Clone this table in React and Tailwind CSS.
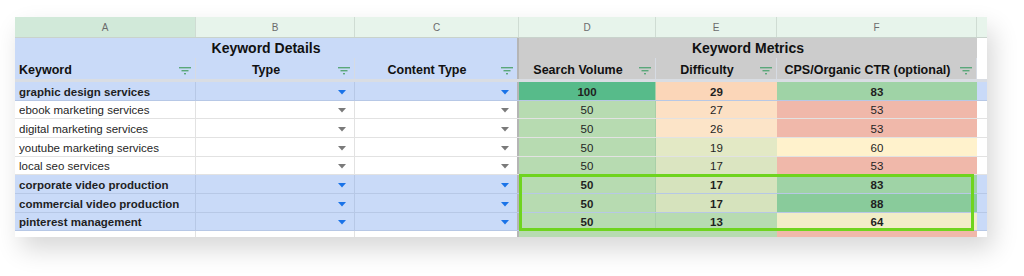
import React from 'react'

const COLS = 'grid grid-cols-[181px_159px_164px_137px_121px_200px_10px]'

const ROWS = [
  { k: 'graphic design services', bold: true, d: 100, e: 29, f: 83, h: 'h-[19px]', dc: 'bg-[#57bb8a]', ec: 'bg-[#fbd6b8]', fc: 'bg-[#9fd3a6]' },
  { k: 'ebook marketing services', d: 50, e: 27, f: 53, h: 'h-[18px]', dc: 'bg-[#b7dbb1]', ec: 'bg-[#fce0c4]', fc: 'bg-[#f0b8aa]' },
  { k: 'digital marketing services', d: 50, e: 26, f: 53, h: 'h-[19px]', dc: 'bg-[#b7dbb1]', ec: 'bg-[#fce4c8]', fc: 'bg-[#f0b8aa]' },
  { k: 'youtube marketing services', d: 50, e: 19, f: 60, h: 'h-[19px]', dc: 'bg-[#b7dbb1]', ec: 'bg-[#e3e9c5]', fc: 'bg-[#fff2cc]' },
  { k: 'local seo services', d: 50, e: 17, f: 53, h: 'h-[18px]', dc: 'bg-[#b7dbb1]', ec: 'bg-[#dbe5c1]', fc: 'bg-[#f0b8aa]' },
  { k: 'corporate video production', bold: true, d: 50, e: 17, f: 83, h: 'h-[19px]', dc: 'bg-[#b7dbb1]', ec: 'bg-[#d6e3bd]', fc: 'bg-[#9fd3a6]' },
  { k: 'commercial video production', bold: true, d: 50, e: 17, f: 88, h: 'h-[19px]', dc: 'bg-[#b7dbb1]', ec: 'bg-[#d6e3bd]', fc: 'bg-[#89cb9b]' },
  { k: 'pinterest management', bold: true, d: 50, e: 13, f: 64, h: 'h-[18px]', dc: 'bg-[#b7dbb1]', ec: 'bg-[#b7dbb1]', fc: 'bg-[#f1edc7]' },
]

function FilterIcon() {
  return (
    <svg width="12" height="9" viewBox="0 0 12 9" className="shrink-0 mb-[3px]">
      <rect x="0" y="1" width="12" height="1.4" fill="#5aa77a" />
      <rect x="2.5" y="4" width="7" height="1.4" fill="#5aa77a" />
      <rect x="5" y="7" width="2" height="1.4" fill="#5aa77a" />
    </svg>
  )
}

function Arrow({ blue }) {
  return (
    <svg width="8" height="5" viewBox="0 0 8 5" className="shrink-0 mb-[5px]">
      <path d="M0 0 L8 0 L4 4.5 Z" fill={blue ? '#1a73e8' : '#7a7a7a'} />
    </svg>
  )
}

function HeadCell({ label, center, bg, last }) {
  return (
    <div className={`${bg} h-[21px] flex items-end pb-[1px] pl-[4px] pr-[4px] gap-[6px] border-r ${last ? 'border-[#b5b5b5] border-r-2' : 'border-[#d6dbe3]'}`}>
      <span className={`flex-1 font-bold text-[12.5px] leading-[16px] text-[#111] whitespace-nowrap ${center ? 'text-center' : ''}`}>{label}</span>
      <FilterIcon />
    </div>
  )
}

export default function App() {
  return (
    <div className="w-[1024px] h-[276px] bg-white pt-[17px] pl-[15px] font-['Liberation_Sans',Arial,sans-serif]">
      <div className="w-[972px] h-[220px] bg-white shadow-[6px_12px_24px_rgba(0,0,0,0.16)] overflow-hidden">
        {/* column letters */}
        <div className={`${COLS} h-[20px] text-[10px] text-[#6b6b6b]`}>
          {['A', 'B', 'C', 'D', 'E', 'F'].map((l, i) => (
            <div key={l} className={`${i === 0 ? 'bg-[#d1e9d9]' : 'bg-[#e7f4eb]'} border-r border-[#cfdcd3] flex items-center justify-center`}>{l}</div>
          ))}
          <div className="bg-[#e7f4eb]" />
        </div>

        {/* section header */}
        <div className={`${COLS} h-[21px] border-t border-[#c9d3cc] border-b border-b-[#9fcfb2]`}>
          <div className="col-span-3 bg-[#c9daf8] border-r-2 border-[#b5b5b5] flex items-center justify-center font-bold text-[14px] text-[#111]">Keyword Details</div>
          <div className="col-span-3 bg-[#cccccc] flex items-center justify-center font-bold text-[14px] text-[#111]">Keyword Metrics</div>
          <div className="bg-white" />
        </div>

        {/* headers */}
        <div className={COLS}>
          <HeadCell label="Keyword" bg="bg-[#c9daf8]" />
          <HeadCell label="Type" center bg="bg-[#c9daf8]" />
          <HeadCell label="Content Type" center bg="bg-[#c9daf8]" last />
          <HeadCell label="Search Volume" center bg="bg-[#cccccc]" />
          <HeadCell label="Difficulty" center bg="bg-[#cccccc]" />
          <HeadCell label="CPS/Organic CTR (optional)" center bg="bg-[#cccccc]" />
          <div className="bg-white" />
        </div>
        <div className="h-[3px] bg-[#d9dde3]" />

        {/* data */}
        <div className="relative">
          {ROWS.map(r => {
            const rowBg = r.bold ? 'bg-[#c9daf8]' : 'bg-white'
            const line = r.bold ? 'border-[#b7c8e6]' : 'border-[#e2e2e2]'
            const weight = r.bold ? 'font-bold' : ''
            return (
              <div key={r.k} className={`${COLS} ${r.h} text-[11.5px] leading-[14px] text-[#1f1f1f] border-b ${line}`}>
                <div className={`${rowBg} ${weight} border-r ${line} flex items-end pb-[1px] px-[4px] whitespace-nowrap overflow-hidden`}>{r.k}</div>
                <div className={`${rowBg} border-r ${line} flex items-end justify-end pr-[8px]`}><Arrow blue={r.bold} /></div>
                <div className={`${rowBg} border-r-2 border-[#b5b5b5] flex items-end justify-end pr-[8px]`}><Arrow blue={r.bold} /></div>
                <div className={`${r.dc} ${weight} border-r border-[#a9cfa8] flex items-end pb-[1px] justify-center`}>{r.d}</div>
                <div className={`${r.ec} ${weight} flex items-end pb-[1px] justify-center`}>{r.e}</div>
                <div className={`${r.fc} ${weight} flex items-end pb-[1px] justify-center`}>{r.f}</div>
                <div className={rowBg} />
              </div>
            )
          })}
          <div className={`${COLS} h-[8px]`}>
            <div className="bg-white border-r border-[#e2e2e2]" />
            <div className="bg-white border-r border-[#e2e2e2]" />
            <div className="bg-white border-r-2 border-[#b5b5b5]" />
            <div className="bg-[#b7dbb1]" />
            <div className="bg-[#b7dbb1]" />
            <div className="bg-[#f0b8aa]" />
            <div className="bg-white" />
          </div>

          {/* selection */}
          <div className="absolute left-[504px] top-[92px] w-[455px] h-[57px] border-[3px] border-[#6fd41e] pointer-events-none" />
        </div>
      </div>
    </div>
  )
}
